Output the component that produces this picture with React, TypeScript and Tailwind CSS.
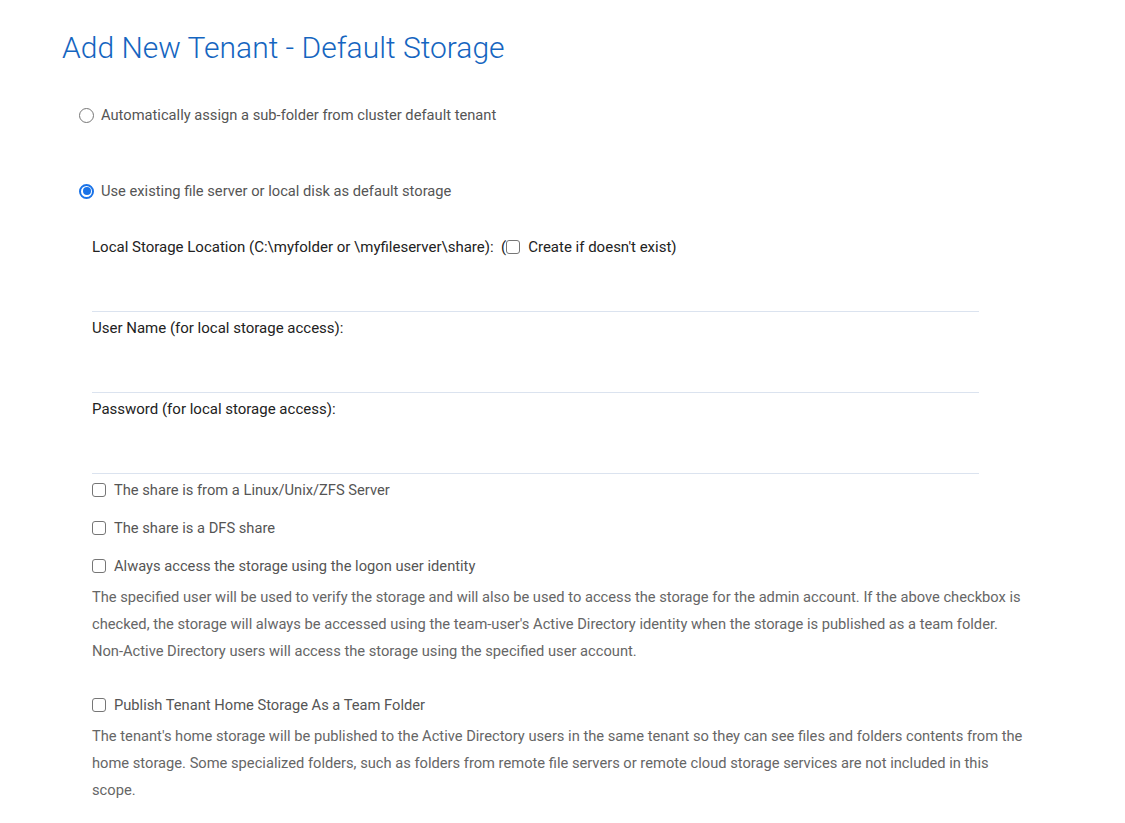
import React from "react";

function Radio({ checked }: { checked?: boolean }) {
  return checked ? (
    <span className="inline-flex h-[15px] w-[15px] shrink-0 items-center justify-center rounded-full border-2 border-[#1a73e8] bg-white">
      <span className="h-[8px] w-[8px] rounded-full bg-[#1a73e8]" />
    </span>
  ) : (
    <span className="inline-block h-[15px] w-[15px] shrink-0 rounded-full border border-[#767676] bg-white" />
  );
}

function Check() {
  return <span className="inline-block h-[14px] w-[14px] shrink-0 rounded-[3px] border border-[#767676] bg-white" />;
}

function FieldInput() {
  return <div className="h-[55px] w-[887px] border-b border-[#dbe3ef]" />;
}

export default function App() {
  return (
    <div
      className="min-h-[823px] w-full bg-white pl-[62px] pt-[30px]"
      style={{ fontFamily: "Roboto, 'Noto Sans', sans-serif" }}
    >
      <h1 className="h-[36px] text-[30px] font-light leading-[36px] text-[#1565c0]">
        Add New Tenant - Default Storage
      </h1>

      <div className="ml-[17px] mt-[39px] flex h-[20px] items-center gap-[7px] text-[14.7px] text-[#555]">
        <Radio />
        <span>Automatically assign a sub-folder from cluster default tenant</span>
      </div>

      <div className="ml-[17px] mt-[56px] flex h-[20px] items-center gap-[7px] text-[14.7px] text-[#555]">
        <Radio checked />
        <span>Use existing file server or local disk as default storage</span>
      </div>

      <div className="ml-[30px] w-[936px]">
        <div className="mt-[36px] flex h-[20px] items-center text-[15px] text-[#222]">
          <span>Local Storage Location (C:\myfolder or \myfileserver\share):&nbsp;&nbsp;(</span>
          <Check />
          <span className="ml-[8px]">Create if doesn't exist)</span>
        </div>
        <FieldInput />

        <div className="mt-[6px] flex h-[20px] items-center text-[15px] text-[#222]">
          User Name (for local storage access):
        </div>
        <FieldInput />

        <div className="mt-[6px] flex h-[20px] items-center text-[15px] text-[#222]">
          Password (for local storage access):
        </div>
        <FieldInput />

        <div className="mt-[6px] flex h-[20px] items-center gap-[8px] text-[14.7px] text-[#555]">
          <Check />
          <span>The share is from a Linux/Unix/ZFS Server</span>
        </div>
        <div className="mt-[18px] flex h-[20px] items-center gap-[8px] text-[14.7px] text-[#555]">
          <Check />
          <span>The share is a DFS share</span>
        </div>
        <div className="mt-[18px] flex h-[20px] items-center gap-[8px] text-[14.7px] text-[#555]">
          <Check />
          <span>Always access the storage using the logon user identity</span>
        </div>
        <p className="mt-[8px] text-[14.7px] leading-[27px] text-[#666]">
          The specified user will be used to verify the storage and will also be used to access the storage for the admin account. If the above checkbox is checked, the storage will always be accessed using the team-user's Active Directory identity when the storage is published as a team folder. Non-Active Directory users will access the storage using the specified user account.
        </p>

        <div className="mt-[30px] flex h-[20px] items-center gap-[8px] text-[14.7px] text-[#555]">
          <Check />
          <span>Publish Tenant Home Storage As a Team Folder</span>
        </div>
        <p className="mt-[8px] text-[14.7px] leading-[27px] text-[#666]">
          The tenant's home storage will be published to the Active Directory users in the same tenant so they can see files and folders contents from the home storage. Some specialized folders, such as folders from remote file servers or remote cloud storage services are not included in this scope.
        </p>
      </div>
    </div>
  );
}
